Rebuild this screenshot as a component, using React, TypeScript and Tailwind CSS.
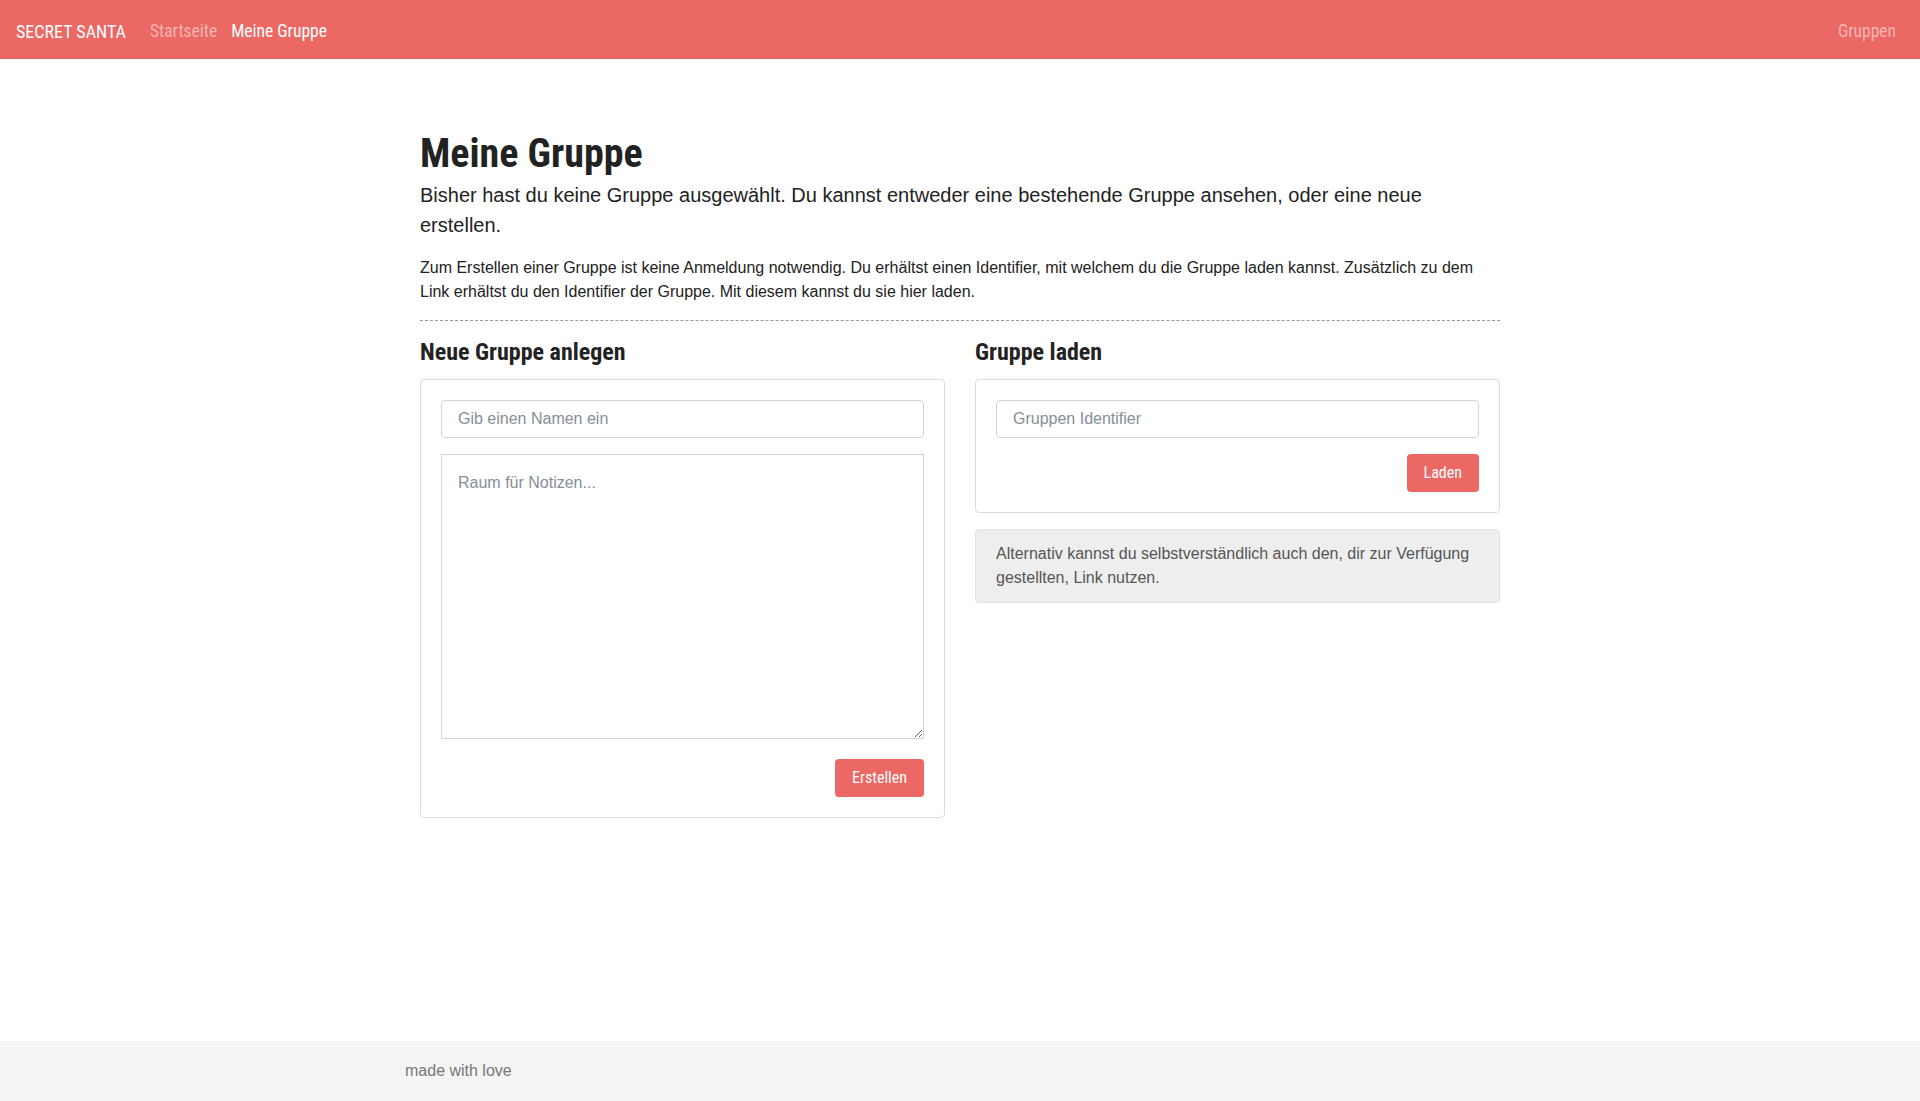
import React from "react";

const narrow = "font-['Roboto','Liberation_Sans',sans-serif] [font-stretch:75%]";

export default function App() {
  return (
    <div className="min-h-screen flex flex-col bg-white font-['Liberation_Sans',Arial,sans-serif] text-[#222]">
      <nav className={`h-[59px] bg-[#eb6864] flex items-center px-4 pt-1 ${narrow}`}>
        <span className="text-[18px] text-white mr-4">SECRET SANTA</span>
        <a className="px-2 text-[17.5px] text-[#f5b4b2]">Startseite</a>
        <a className="pl-[6px] pr-2 text-[17.5px] text-white">Meine Gruppe</a>
        <a className="ml-auto px-2 text-[17.5px] text-[#f5b4b2]">Gruppen</a>
      </nav>

      <main className="flex-1">
        <div className="w-[1080px] mx-auto pt-[71px] pb-10">
          <h1 className={`${narrow} text-[40px] leading-[48px] font-bold text-[#222]`}>Meine Gruppe</h1>
          <p className="mt-[2px] text-[20px] leading-[30px] text-[#222]">
            Bisher hast du keine Gruppe ausgewählt. Du kannst entweder eine bestehende Gruppe ansehen, oder eine neue erstellen.
          </p>
          <div className="pb-4 border-b border-dashed border-[#999]">
            <p className="mt-4 text-[16px] leading-6 text-[#222]">
              Zum Erstellen einer Gruppe ist keine Anmeldung notwendig. Du erhältst einen Identifier, mit welchem du die Gruppe laden kannst. Zusätzlich zu dem Link erhältst du den Identifier der Gruppe. Mit diesem kannst du sie hier laden.
            </p>
          </div>

          <div className="grid grid-cols-2 gap-[30px]">
            <div>
              <h3 className={`${narrow} mt-[17px] mb-[12px] text-[24px] leading-[29px] font-bold text-[#222]`}>Neue Gruppe anlegen</h3>
              <div className="border border-[#dcdcdc] rounded p-5">
                <input
                  className="block w-full h-[38px] border border-[#ced4da] rounded px-4 text-[16px] text-[#495057] placeholder:text-[#868e96] outline-none"
                  placeholder="Gib einen Namen ein"
                />
                <textarea
                  className="block w-full h-[285px] mt-4 border border-[#ced4da] p-4 text-[16px] leading-6 text-[#495057] placeholder:text-[#868e96] outline-none"
                  placeholder="Raum für Notizen..."
                />
                <div className="flex justify-end mt-5">
                  <button className={`${narrow} h-[38px] px-[17px] rounded bg-[#eb6864] text-white text-[16px]`}>Erstellen</button>
                </div>
              </div>
            </div>

            <div>
              <h3 className={`${narrow} mt-[17px] mb-[12px] text-[24px] leading-[29px] font-bold text-[#222]`}>Gruppe laden</h3>
              <div className="border border-[#dcdcdc] rounded p-5">
                <input
                  className="block w-full h-[38px] border border-[#ced4da] rounded px-4 text-[16px] text-[#495057] placeholder:text-[#868e96] outline-none"
                  placeholder="Gruppen Identifier"
                />
                <div className="flex justify-end mt-4">
                  <button className={`${narrow} h-[38px] px-[17px] rounded bg-[#eb6864] text-white text-[16px]`}>Laden</button>
                </div>
              </div>
              <div className="mt-4 bg-[#eeeeee] border border-[#e3e3e3] rounded px-5 py-3 text-[16px] leading-6 text-[#555]">
                Alternativ kannst du selbstverständlich auch den, dir zur Verfügung gestellten, Link nutzen.
              </div>
            </div>
          </div>
        </div>
      </main>

      <footer className="h-[60px] bg-[#f5f5f5]">
        <div className="w-[1110px] mx-auto h-full flex items-center text-[16px] text-[#777]">made with love</div>
      </footer>
    </div>
  );
}
